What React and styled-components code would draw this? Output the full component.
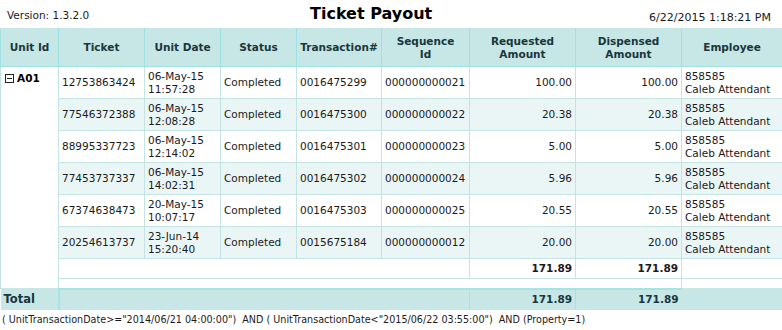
import React from 'react';
import styled, { createGlobalStyle } from 'styled-components';

const GlobalStyle = createGlobalStyle`
  html, body {
    margin: 0;
    padding: 0;
    background: #ffffff;
  }
  body {
    font-family: "DejaVu Sans", Verdana, sans-serif;
    color: #1a1a1a;
  }
`;

const Page = styled.div`
  width: 782px;
  height: 330px;
  overflow: hidden;
`;

const TopBar = styled.div`
  display: grid;
  grid-template-columns: 310px auto 1fr;
  align-items: center;
  height: 28px;
`;

const Version = styled.div`
  font-size: 10.5px;
  padding-left: 7px;
  padding-top: 2px;
`;

const Title = styled.h1`
  margin: 0;
  font-size: 16px;
  font-weight: 700;
  color: #000;
  padding-bottom: 2px;
`;

const Stamp = styled.div`
  font-size: 11px;
  text-align: right;
  padding-right: 11px;
  padding-top: 6px;
`;

const Grid = styled.table`
  width: 782px;
  border-collapse: collapse;
  table-layout: fixed;
  font-size: 10.5px;
  line-height: 13px;
`;

const HeadCell = styled.th`
  height: 37px;
  padding: 0 2px;
  background: #c7e6e6;
  color: #18363c;
  font-weight: 700;
  text-align: center;
  vertical-align: middle;
  border: 1px solid #9fe1e1;
  border-top-color: #c7e6e6;
`;

const Row = styled.tr`
  height: ${p => p.$h || 32}px;
  background: ${p => (p.$alt ? '#eaf6f6' : '#ffffff')};
`;

const Cell = styled.td`
  padding: 0 3px;
  border: 1px solid #c4e4e4;
  vertical-align: middle;
  text-align: ${p => p.$align || 'left'};
  font-weight: ${p => (p.$bold ? 700 : 400)};
  white-space: nowrap;
  overflow: hidden;
`;

const UnitCell = styled.td`
  padding: 5px 3px 0 4px;
  vertical-align: top;
  background: #ffffff;
  border-left: 1px solid #c4e4e4;
  border-right: 1px solid #c4e4e4;
  font-weight: 700;
  color: #000;
`;

const Group = styled.span`
  display: inline-flex;
  align-items: center;
  gap: 3px;
`;

const Toggle = styled.span`
  width: 7px;
  height: 7px;
  border: 1px solid #222;
  position: relative;
  background: #fff;

  &::after {
    content: '';
    position: absolute;
    left: 1px;
    right: 1px;
    top: 3px;
    height: 1px;
    background: #222;
  }
`;

const Spacer = styled.td`
  padding: 0;
  border-top: 1px solid #c4e4e4;
  border-left: ${p => (p.$edge ? '1px solid #c4e4e4' : 'none')};
  border-right: ${p => (p.$edge ? '1px solid #c4e4e4' : 'none')};
`;

const TotalRow = styled.tr`
  height: 21px;
  background: #c7e6e6;
  color: #18363c;
  font-weight: 700;
`;

const TotalCell = styled.td`
  padding: 0 3px;
  text-align: ${p => p.$align || 'left'};
  vertical-align: middle;
  border-top: ${p => (p.$top ? '2px solid #a6e3e3' : '1px solid #c7e6e6')};
  border-left: ${p => (p.$left ? `${p.$left}px solid #a6e3e3` : 'none')};
  border-bottom: none;
  font-size: ${p => (p.$big ? '11.5px' : '10.5px')};
`;

const Filter = styled.div`
  font-size: 9.6px;
  padding: 4px 0 0 2px;
  white-space: pre;
`;

const widths = [58, 86, 76, 76, 85, 88, 106, 106, 101];

const rows = [
  ['12753863424', '06-May-15', '11:57:28', '0016475299', '000000000021', '100.00'],
  ['77546372388', '06-May-15', '12:08:28', '0016475300', '000000000022', '20.38'],
  ['88995337723', '06-May-15', '12:14:02', '0016475301', '000000000023', '5.00'],
  ['77453737337', '06-May-15', '14:02:31', '0016475302', '000000000024', '5.96'],
  ['67374638473', '20-May-15', '10:07:17', '0016475303', '000000000025', '20.55'],
  ['20254613737', '23-Jun-14', '15:20:40', '0015675184', '000000000012', '20.00'],
];

const headers = [
  'Unit Id',
  'Ticket',
  'Unit Date',
  'Status',
  'Transaction#',
  <>Sequence<br />Id</>,
  <>Requested<br />Amount</>,
  <>Dispensed<br />Amount</>,
  'Employee',
];

export default function App() {
  return (
    <Page>
      <GlobalStyle />
      <TopBar>
        <Version>Version: 1.3.2.0</Version>
        <Title>Ticket Payout</Title>
        <Stamp>6/22/2015 1:18:21 PM</Stamp>
      </TopBar>
      <Grid>
        <colgroup>
          {widths.map((w, i) => (
            <col key={i} style={{ width: w }} />
          ))}
        </colgroup>
        <thead>
          <tr>
            {headers.map((h, i) => (
              <HeadCell key={i}>{h}</HeadCell>
            ))}
          </tr>
        </thead>
        <tbody>
          {rows.map((r, i) => (
            <Row key={r[0]} $alt={i % 2 === 1}>
              {i === 0 && (
                <UnitCell rowSpan={rows.length + 2}>
                  <Group>
                    <Toggle />
                    A01
                  </Group>
                </UnitCell>
              )}
              <Cell>{r[0]}</Cell>
              <Cell>
                {r[1]}
                <br />
                {r[2]}
              </Cell>
              <Cell>Completed</Cell>
              <Cell>{r[3]}</Cell>
              <Cell>{r[4]}</Cell>
              <Cell $align="right">{r[5]}</Cell>
              <Cell $align="right">{r[5]}</Cell>
              <Cell>
                858585
                <br />
                Caleb Attendant
              </Cell>
            </Row>
          ))}
          <Row $h={20}>
            <Cell colSpan={5} />
            <Cell $align="right" $bold>171.89</Cell>
            <Cell $align="right" $bold>171.89</Cell>
            <Cell />
          </Row>
          <Row $h={10}>
            <Spacer colSpan={7} />
            <Spacer $edge />
          </Row>
          <TotalRow>
            <TotalCell $big>Total</TotalCell>
            <TotalCell colSpan={5} $top $left={2} />
            <TotalCell $top $left={1} $align="right">171.89</TotalCell>
            <TotalCell $top $left={1} $align="right">171.89</TotalCell>
            <TotalCell />
          </TotalRow>
        </tbody>
      </Grid>
      <Filter>{'( UnitTransactionDate>="2014/06/21 04:00:00")  AND ( UnitTransactionDate<"2015/06/22 03:55:00")  AND (Property=1)'}</Filter>
    </Page>
  );
}
